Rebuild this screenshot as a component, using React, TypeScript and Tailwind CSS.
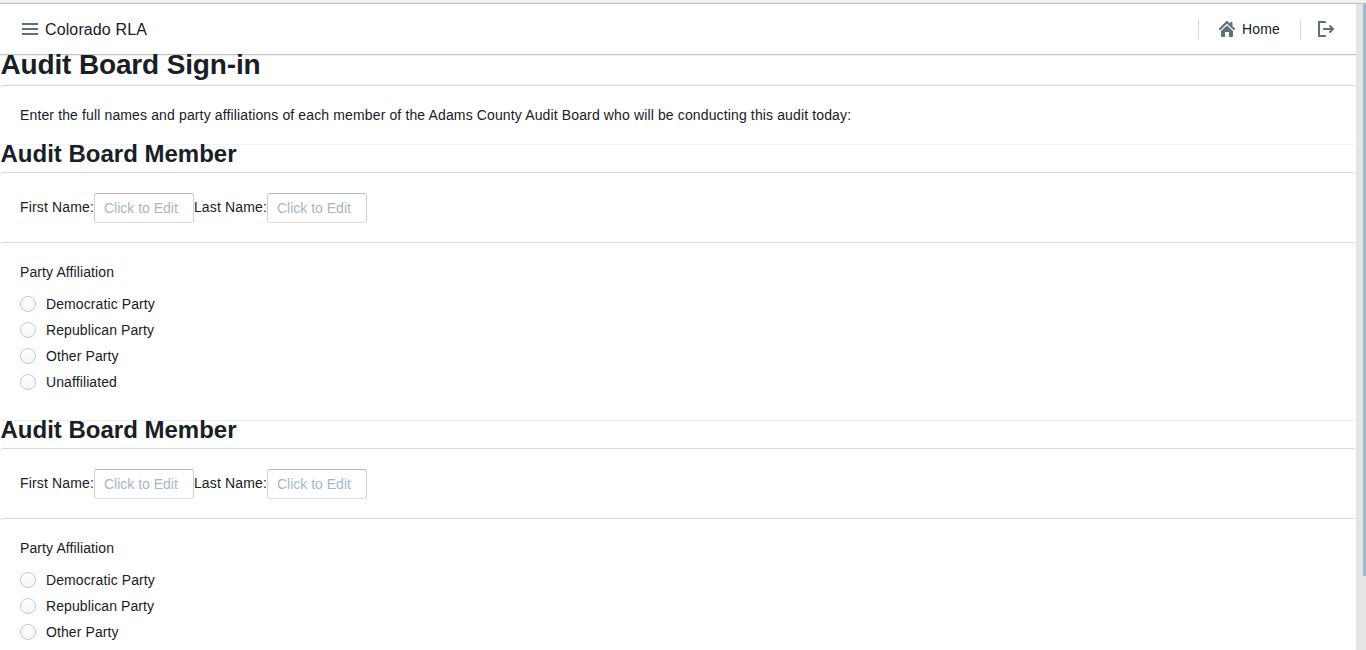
import type { ReactNode } from 'react';

const PARTIES = ['Democratic Party', 'Republican Party', 'Other Party', 'Unaffiliated'];

function MenuIcon() {
  return (
    <svg className="block size-4" viewBox="0 0 16 16" fill="#5c7080">
      <path d="M0 2h16v2H0zM0 7h16v2H0zM0 12h16v2H0z" />
    </svg>
  );
}

function HomeIcon() {
  return (
    <svg className="block size-4" viewBox="0 0 16 16" fill="#5c7080">
      <path d="M2 10v5c0 .55.45 1 1 1h3v-5h4v5h3c.55 0 1-.45 1-1v-5L8 4.5 2 10zm13.71-2.71L13.500 5.200V2c0-.55-.45-1-1-1h-.5c-.55 0-1 .45-1 1v.8L8.710.29a1 1 0 0 0-1.420 0l-7 7A1 1 0 0 0 1.710 8.710L8 2.810l6.290 5.900a1 1 0 0 0 1.420-1.420z" />
    </svg>
  );
}

function LogOutIcon() {
  return (
    <svg className="block size-4" viewBox="0 0 16 16" fill="#5c7080">
      <path d="M7 14H2V2h5c.55 0 1-.45 1-1s-.45-1-1-1H1C.45 0 0 .45 0 1v14c0 .55.45 1 1 1h6c.55 0 1-.45 1-1s-.45-1-1-1zm8.700-6.700l-3-3c-.18-.19-.43-.3-.7-.3a1 1 0 0 0-.7 1.700L12.590 7H6c-.55 0-1 .45-1 1s.45 1 1 1h6.590l-1.290 1.290a1 1 0 0 0 1.410 1.410l3-3a1 1 0 0 0 0-1.400z" />
    </svg>
  );
}

function Field({ label }: { label: string }) {
  return (
    <label className="flex">
      <span className="pt-[5px] leading-[18px] tracking-[0.145px]">{label}</span>
      <input
        type="text"
        placeholder="Click to Edit"
        className="block h-[30px] w-[100px] rounded-[3px] border border-[#cfd0d1] border-t-[#b8b9ba] border-b-[#dcdddd] bg-white px-[9px] text-sm outline-none placeholder:text-[#a7b6c2]"
      />
    </label>
  );
}

function Heading({ children }: { children: ReactNode }) {
  return (
    <h3 className="h-[27px] pl-[0.5px] text-2xl leading-[18px] font-semibold">{children}</h3>
  );
}

function Member({ id }: { id: string }) {
  return (
    <section>
      <Heading>Audit Board Member</Heading>
      <div className="h-[70px] rounded-t-[3px] border-t border-[#d9dadb] px-5 pt-5">
        <div className="flex">
          <Field label="First Name:" />
          <Field label="Last Name:" />
        </div>
      </div>
      <div className="h-[179px] rounded-[3px] border-y border-t-[#d9dadb] border-b-[#ededee] px-5 pt-5">
        <div className="mb-[15px] leading-[18px] tracking-[0.1px]">Party Affiliation</div>
        <div className="flex flex-col gap-[10px]">
          {PARTIES.map((party) => (
            <label key={party} className="flex h-4 items-center gap-[10px] leading-4 tracking-[0.1px]">
              <input
                type="radio"
                name={id}
                className="size-4 appearance-none rounded-full border border-[#c5c8ca] bg-linear-to-b from-white to-[#f3f5f8]"
              />
              {party}
            </label>
          ))}
        </div>
      </div>
    </section>
  );
}

export default function App() {
  return (
    <div className="flex h-[650px] flex-col overflow-hidden bg-white font-['Liberation_Sans',Arial,sans-serif] text-sm text-[#182026]">
      <div className="h-1 shrink-0 border-b border-[#bcbcbc] bg-[#f0f0f0]" />
      <div className="flex min-h-0 flex-1">
        <div className="min-w-0 flex-1 overflow-hidden">
          <nav className="flex h-[51px] items-center justify-between border-b border-[#c2c3c4] px-[22px] shadow-[0_1px_0_rgba(16,22,26,0.06)]">
            <div className="flex items-center gap-[7px]">
              <MenuIcon />
              <span className="pt-px text-base leading-5 tracking-[0.12px]">Colorado RLA</span>
            </div>
            <div className="flex items-center">
              <span className="h-5 w-px bg-[#d9dadb]" />
              <a className="ml-5 flex items-center gap-[7px]">
                <HomeIcon />
                <span className="w-[38px] leading-5 tracking-[0.12px]">Home</span>
              </a>
              <span className="ml-5 h-5 w-px bg-[#d9dadb]" />
              <a className="ml-[17px]">
                <LogOutIcon />
              </a>
            </div>
          </nav>
          <h2 className="h-[30px] pl-[0.5px] text-[28px] leading-5 font-semibold tracking-[-0.15px]">
            Audit Board Sign-in
          </h2>
          <div className="h-[60px] rounded-[3px] border-y border-t-[#d9dadb] border-b-[#f3f3f3] px-5 pt-5 leading-[18px] tracking-[0.133px] shadow-[0_-1px_0_rgba(16,22,26,0.04)]">
            Enter the full names and party affiliations of each member of the Adams County Audit Board who will be
            conducting this audit today:
          </div>
          <Member id="member-1" />
          <Member id="member-2" />
        </div>
        <div className="flex w-[10px] justify-end bg-[#e5e5e5]">
          <div className="h-[572px] w-[3px] bg-[#a1bad1]" />
        </div>
      </div>
    </div>
  );
}
